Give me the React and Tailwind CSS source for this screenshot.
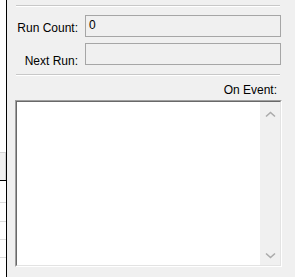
import React from 'react';

const Chevron = ({ down }) => (
    <svg width="11" height="7" viewBox="0 0 11 7" className="block">
        <polyline
            points={down ? '1,1.5 5.5,5.5 10,1.5' : '1,5.5 5.5,1.5 10,5.5'}
            fill="none"
            stroke="#ababab"
            strokeWidth="1.6"
        />
    </svg>
);

const Field = ({ label, value, labelTop }) => (
    <div className="flex ml-[9px] h-[22px]">
        <span className={`w-[62px] text-right leading-[14px] whitespace-nowrap ${labelTop}`}>{label}</span>
        <div className="ml-[7px] w-[196px] h-[22px] border border-[#a6a6a6] bg-[#f0f0f0] pl-[3px] leading-[19px]">
            {value}
        </div>
    </div>
);

const App = () => {
    return (
        <div
            className="flex w-[295px] h-[277px] overflow-hidden bg-[#f0f0f0] text-[12px] text-black"
            style={{ fontFamily: '"Liberation Sans", Arial, sans-serif' }}
        >
            {/* grid strip cut off at the left */}
            <div className="w-[7px] shrink-0 bg-white border-r border-black flex flex-col">
                <div className="h-[152px]" />
                <div className="h-[28px] bg-[#f0f0f0] border-t border-r border-[#d4d4d4]" />
                <div className="h-px bg-black" />
                <div className="h-[22px] border-b border-[#dcdcdc]" />
                <div className="h-[19px] border-b border-[#dcdcdc]" />
                <div className="h-[18px] border-b border-[#dcdcdc]" />
                <div className="h-[18px] border-b border-[#dcdcdc]" />
            </div>

            <div className="flex-1 flex flex-col">
                <div className="mt-[5px] ml-[9px] w-[264px] border-t border-b border-t-[#c8c8c8] border-b-white" />

                <div className="mt-[8px]">
                    <Field label="Run Count:" value="0" labelTop="mt-[6px]" />
                </div>
                <div className="mt-[6px]">
                    <Field label="Next Run:" value="" labelTop="mt-[11px]" />
                </div>

                <div className="mt-[9px] ml-[9px] w-[264px] border-t border-b border-t-[#c8c8c8] border-b-white" />

                <div className="mt-[7px] ml-[9px] w-[261px] text-right leading-[14px]">On Event:</div>

                <div className="mt-[3px] ml-[8px] w-[267px] h-[167px] border border-t-[#a0a0a0] border-l-[#a0a0a0] border-r-white border-b-white">
                    <div className="h-full flex border border-t-[#696969] border-l-[#696969] border-r-[#e3e3e3] border-b-[#e3e3e3]">
                        <div className="flex-1 bg-white" />
                        <div className="w-[20px] bg-[#f0f0f0] flex flex-col items-center justify-between pt-[9px] pb-[6px]">
                            <Chevron />
                            <Chevron down />
                        </div>
                    </div>
                </div>
            </div>
        </div>
    );
};

export default App;
